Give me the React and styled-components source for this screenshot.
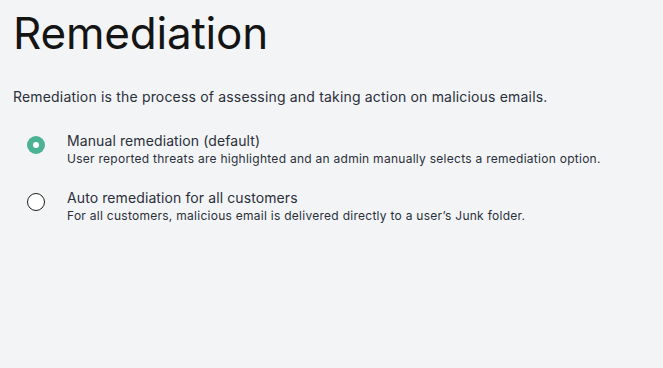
import React, { useState } from 'react'
import styled, { createGlobalStyle } from 'styled-components'

const GlobalStyle = createGlobalStyle`
  html, body {
    margin: 0;
    padding: 0;
    background: #f3f4f6;
  }
  body {
    font-family: Inter, "Noto Sans", sans-serif;
    color: #1b1b1b;
  }
`

const Page = styled.div`
  padding: 8px 13px;
  min-height: 352px;
`

const Title = styled.h1`
  margin: 0;
  font-size: 44px;
  font-weight: 400;
  line-height: 50px;
  letter-spacing: -0.2px;
  color: #141414;
`

const Intro = styled.p`
  margin: 30px 0 0;
  font-size: 14px;
  line-height: 18px;
  letter-spacing: 0.18px;
  color: #2a2f3a;
`

const Options = styled.div`
  display: flex;
  flex-direction: column;
  gap: 21px;
  margin-top: 26px;
  padding-left: 14px;
`

const Option = styled.label`
  display: flex;
  align-items: flex-start;
  gap: 22px;
  cursor: pointer;
`

const Radio = styled.span`
  flex: none;
  box-sizing: border-box;
  width: 18px;
  height: 18px;
  margin-top: 4px;
  border-radius: 50%;
  display: flex;
  align-items: center;
  justify-content: center;
  background: ${p => (p.checked ? '#4bb394' : '#ffffff')};
  border: ${p => (p.checked ? 'none' : '1.5px solid #1f1f1f')};
  &::after {
    content: '';
    display: ${p => (p.checked ? 'block' : 'none')};
    width: 6px;
    height: 6px;
    border-radius: 50%;
    background: #ffffff;
  }
`

const Text = styled.div`
  display: flex;
  flex-direction: column;
`

const OptionTitle = styled.span`
  font-size: 14px;
  line-height: 18px;
  letter-spacing: 0.1px;
  color: #2a2f3a;
`

const OptionDesc = styled.span`
  font-size: 12px;
  line-height: 18px;
  letter-spacing: 0.27px;
  color: #2a2f3a;
`

const options = [
  {
    id: 'manual',
    title: 'Manual remediation (default)',
    desc: 'User reported threats are highlighted and an admin manually selects a remediation option.',
  },
  {
    id: 'auto',
    title: 'Auto remediation for all customers',
    desc: 'For all customers, malicious email is delivered directly to a user\u2019s Junk folder.',
  },
]

export default function App() {
  const [selected, setSelected] = useState('manual')
  return (
    <>
      <GlobalStyle />
      <Page>
        <Title>Remediation</Title>
        <Intro>Remediation is the process of assessing and taking action on malicious emails.</Intro>
        <Options>
          {options.map(o => (
            <Option key={o.id} onClick={() => setSelected(o.id)}>
              <Radio checked={selected === o.id} />
              <Text>
                <OptionTitle>{o.title}</OptionTitle>
                <OptionDesc>{o.desc}</OptionDesc>
              </Text>
            </Option>
          ))}
        </Options>
      </Page>
    </>
  )
}
